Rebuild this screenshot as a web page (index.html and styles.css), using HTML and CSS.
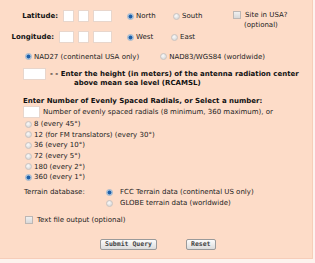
FILE: index.html
```html
<!DOCTYPE html>
<html lang="en">

<head>
    <meta charset="UTF-8" />
    <title>Radial HAAT</title>
    <link rel="stylesheet" href="styles.css">
</head>

<body>
    <div class="panel">
        <div class="coord-row first">
            <div class="coord">
                <label class="bold">Latitude:</label>
                <input type="text" class="w11" />
                <input type="text" class="w11" />
                <input type="text" class="w19" />
            </div>
            <label class="opt col1"><input type="radio" name="ns" checked /> North</label>
            <label class="opt col2"><input type="radio" name="ns" /> South</label>
            <div class="usa">
                <label class="opt"><input type="checkbox" /> Site in USA?</label>
                <span class="optional">(optional)</span>
            </div>
        </div>
        <div class="coord-row">
            <div class="coord">
                <label class="bold">Longitude:</label>
                <input type="text" class="w15" />
                <input type="text" class="w11" />
                <input type="text" class="w19" />
            </div>
            <label class="opt col1"><input type="radio" name="ew" checked /> West</label>
            <label class="opt col2 east"><input type="radio" name="ew" /> East</label>
        </div>
        <div class="datum">
            <label class="opt"><input type="radio" name="datum" checked /> NAD27 (continental USA only)</label>
            <label class="opt nad83"><input type="radio" name="datum" /> NAD83/WGS84 (worldwide)</label>
        </div>
        <div class="height">
            <div class="height-line">
                <input type="text" class="w23" />
                <span class="bold dashes">- - Enter the height (in meters) of the antenna radiation center</span>
            </div>
            <div class="bold height-second">above mean sea level (RCAMSL)</div>
        </div>
        <div class="radials">
            <div class="bold">Enter Number of Evenly Spaced Radials, or Select a number:</div>
            <div class="radial-input">
                <input type="text" class="w17" />
                <span>Number of evenly spaced radials (8 minimum, 360 maximum), or</span>
            </div>
            <label class="opt item"><input type="radio" name="rad" /> 8 (every 45°)</label>
            <label class="opt item"><input type="radio" name="rad" /> 12 (for FM translators) (every 30°)</label>
            <label class="opt item"><input type="radio" name="rad" /> 36 (every 10°)</label>
            <label class="opt item"><input type="radio" name="rad" /> 72 (every 5°)</label>
            <label class="opt item"><input type="radio" name="rad" /> 180 (every 2°)</label>
            <label class="opt item"><input type="radio" name="rad" checked /> 360 (every 1°)</label>
        </div>
        <div class="terrain">
            <span class="terrain-label">Terrain database:</span>
            <div class="terrain-opts">
                <label class="opt"><input type="radio" name="db" checked /> FCC Terrain data (continental US only)</label>
                <label class="opt"><input type="radio" name="db" /> GLOBE terrain data (worldwide)</label>
            </div>
        </div>
        <label class="opt textfile"><input type="checkbox" /> Text file output (optional)</label>
        <div class="buttons">
            <button>Submit Query</button>
            <button>Reset</button>
        </div>
    </div>
</body>

</html>
```

FILE: styles.css
```css
* {
    margin: 0;
    padding: 0;
    box-sizing: border-box;
    font-family: 'DejaVu Sans', Verdana, sans-serif;
}

body {
    background-color: #fdf3ee;
}

.panel {
    width: 313px;
    height: 259px;
    background-color: #fddcc8;
    border-right: 1px solid #f6cdb9;
    border-bottom: 1px solid #f6cdb9;
    font-size: 7px;
    color: #222;
    padding-top: 10px;
}

.bold {
    font-weight: bold;
    color: #111;
}

input[type="text"] {
    height: 12px;
    background: #fff;
    border: 1px solid #e8d6cc;
}

.w11 { width: 11px; }
.w15 { width: 15px; }
.w17 { width: 17px; }
.w19 { width: 19px; }
.w23 { width: 23px; }

input[type="radio"] {
    appearance: none;
    width: 7px;
    height: 7px;
    border-radius: 50%;
    border: 1px solid #c9c4c2;
    background: radial-gradient(circle at 40% 35%, #fafafa 0, #dcdcdc 70%);
    margin-right: 2px;
    flex-shrink: 0;
}

input[type="radio"]:checked {
    border-color: #9fb7cf;
    background: radial-gradient(circle, #1d5fa8 0 1.6px, #bcd2e8 2.4px);
}

input[type="checkbox"] {
    appearance: none;
    width: 8px;
    height: 8px;
    border: 1px solid #bdb7b4;
    background: linear-gradient(#f0f0f0, #d8d8d8);
    margin-right: 4px;
    flex-shrink: 0;
}

.opt {
    display: flex;
    align-items: center;
    white-space: nowrap;
}

.coord-row {
    display: flex;
    align-items: flex-start;
    height: 21px;
}

.coord {
    width: 112px;
    height: 12px;
    display: flex;
    justify-content: flex-end;
    align-items: center;
    gap: 4px;
}

.coord label {
    margin-right: 1px;
}

.col1 {
    height: 12px;
    margin-left: 15px;
    width: 46px;
}

.col2 {
    height: 12px;
    width: 60px;
}

.east {
    margin-left: -2px;
    margin-right: 2px;
}

.usa {
    display: flex;
    flex-direction: column;
    padding-top: 1px;
}

.optional {
    margin-left: 11px;
    margin-top: 2px;
}

.datum {
    display: flex;
    padding-left: 25px;
    height: 11px;
    align-items: center;
    margin-top: -1px;
}

.nad83 {
    margin-left: 21px;
}

.height {
    padding-left: 23px;
    margin-top: 6px;
}

.height-line {
    display: flex;
    align-items: center;
    gap: 4px;
}

.height-second {
    padding-left: 51px;
    margin-top: -1px;
}

.radials {
    display: flex;
    flex-direction: column;
    padding-left: 23px;
    margin-top: 10px;
}

.radial-input {
    display: flex;
    align-items: center;
    gap: 3px;
    margin-top: 1px;
}

.item {
    height: 10.6px;
    padding-left: 2px;
}

.item:first-of-type {
    margin-top: 1px;
}

.terrain {
    display: flex;
    padding-left: 24px;
    margin-top: 4px;
}

.terrain-label {
    width: 82px;
    line-height: 11px;
}

.terrain-opts label {
    height: 11px;
}

.terrain-opts input {
    margin-right: 7px;
}

.textfile {
    padding-left: 25px;
    margin-top: 6px;
    height: 11px;
}

.buttons {
    display: flex;
    gap: 29px;
    padding-left: 100px;
    margin-top: 13px;
}

button {
    height: 11px;
    padding: 0 4px;
    font-family: 'DejaVu Sans Mono', monospace;
    font-size: 6.5px;
    font-weight: bold;
    color: #444;
    background: linear-gradient(#fbfbfb, #dcdcdc);
    border: 1px solid #9a9a9a;
    border-radius: 2px;
}
```
